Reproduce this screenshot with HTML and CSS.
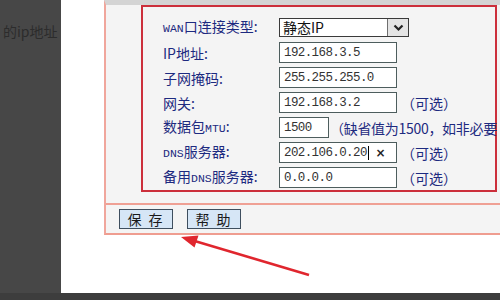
FILE: index.html
```html
<!DOCTYPE html>
<html lang="zh-CN">
<head>
  <meta charset="UTF-8">
  <title>WAN口设置</title>
  <link rel="stylesheet" href="styles.css">
</head>
<body>
<div class="screen">
  <div class="desktop">
    <div class="side"><p class="side-text">的ip地址</p></div>
    <div class="gutter"></div>
    <div class="panel">
      <div class="wan-box">
        <div class="row">
          <span class="label"><span class="en">WAN</span>口连接类型:</span>
          <div class="select">
            <span class="select-text">静态IP</span>
            <span class="select-btn">
              <svg width="11" height="8" viewBox="0 0 11 8"><polyline points="1.5,1.5 5.5,5.5 9.5,1.5" fill="none" stroke="#222" stroke-width="2.2"/></svg>
            </span>
          </div>
        </div>
        <div class="row">
          <span class="label">IP地址:</span>
          <div class="field">192.168.3.5</div>
        </div>
        <div class="row">
          <span class="label">子网掩码:</span>
          <div class="field">255.255.255.0</div>
        </div>
        <div class="row">
          <span class="label">网关:</span>
          <div class="field">192.168.3.2</div>
          <span class="hint">（可选）</span>
        </div>
        <div class="row">
          <span class="label">数据包<span class="en">MTU</span>:</span>
          <div class="field field-short">1500</div>
          <span class="hint hint-long">（缺省值为1500，如非必要</span>
        </div>
        <div class="row">
          <span class="label"><span class="en">DNS</span>服务器:</span>
          <div class="field">202.106.0.20<span class="caret"></span><span class="clear">×</span></div>
          <span class="hint">（可选）</span>
        </div>
        <div class="row">
          <span class="label">备用<span class="en">DNS</span>服务器:</span>
          <div class="field">0.0.0.0</div>
          <span class="hint">（可选）</span>
        </div>
      </div>
      <div class="actions">
        <button class="btn">保 存</button>
        <button class="btn">帮 助</button>
      </div>
    </div>
  </div>
  <div class="taskbar"></div>
</div>
<svg class="arrow" width="500" height="300" viewBox="0 0 500 300">
  <line x1="309" y1="275" x2="193" y2="240.5" stroke="#e0262e" stroke-width="2.5"/>
  <polygon points="181,237 198.5,235.5 194.5,247.5" fill="#e0262e"/>
</svg>
</body>
</html>
```

FILE: styles.css
```css
html, body { margin: 0; width: 500px; height: 300px; overflow: hidden; }
body { background: #fff; font-family: "Noto Sans CJK SC", sans-serif; position: relative; }

.screen { display: flex; flex-direction: column; height: 300px; }
.desktop { display: flex; height: 293px; }
.taskbar { height: 7px; background: #3d3d3d; }

.side { width: 61px; background: #474747; overflow: hidden; }
.side-text { margin: 23px 0 0 3px; font-size: 14px; line-height: 17px; color: #2c2c2c; white-space: nowrap; }
.gutter { width: 43px; }

/* 设置面板 */
.panel {
  flex: 1;
  align-self: flex-start;
  min-width: 0;
  background: #f4f4f4;
  border-top: 5px solid #d4d4d4;
  border-left: 2px solid #f0a69c;
  border-bottom: 2px solid #ef9d90;
}
.wan-box { margin: 0 3px 0 35px; border: 2px solid #cc2f3b; padding: 8px 0 0 20px; }
.row { display: flex; align-items: center; height: 25px; white-space: nowrap; }
.label { width: 116px; flex: none; font-size: 14px; line-height: 16px; color: #1d2a80; }
.en { font-family: "Liberation Mono", monospace; font-size: 11.5px; }

.field {
  box-sizing: border-box;
  flex: none;
  width: 118px;
  height: 21px;
  display: flex;
  align-items: center;
  padding-left: 4px;
  background: #fff;
  border: 1px solid #4d5d5d;
  font-family: "Liberation Mono", monospace;
  font-size: 12.5px;
  letter-spacing: -0.6px;
  color: #333;
}
.field-short { width: 50px; }
.caret { width: 1px; height: 14px; background: #000; margin-left: 1px; }
.clear { margin-left: auto; margin-right: 11px; font-family: "DejaVu Sans", sans-serif; font-size: 12px; font-weight: bold; color: #222; }
.hint { margin-left: 4px; font-size: 14px; color: #1d2a80; }
.hint-long { margin-left: 1px; letter-spacing: -0.3px; }

.select {
  box-sizing: border-box;
  flex: none;
  width: 130px;
  height: 19px;
  display: flex;
  background: #fff;
  border: 1px solid #3a3a3a;
}
.select-text { flex: 1; padding-left: 3px; font-size: 14px; line-height: 17px; color: #111; }
.select-btn {
  width: 20px;
  display: flex;
  align-items: center;
  justify-content: center;
  background: #e4e4e4;
  border-left: 1px solid #6f6f6f;
}

.actions { margin-top: 11px; border-top: 2px solid #efa094; padding: 4px 0 4px 13px; display: flex; gap: 14px; }
.btn {
  box-sizing: border-box;
  width: 54px;
  height: 20px;
  padding: 0;
  background: #d6e6f6;
  border: 1px solid #3e4e5e;
  font-family: "Noto Sans CJK SC", sans-serif;
  font-size: 14px;
  line-height: 16px;
  letter-spacing: 2px;
  color: #1a1a1a;
}

.arrow { position: absolute; left: 0; top: 0; pointer-events: none; }
```
